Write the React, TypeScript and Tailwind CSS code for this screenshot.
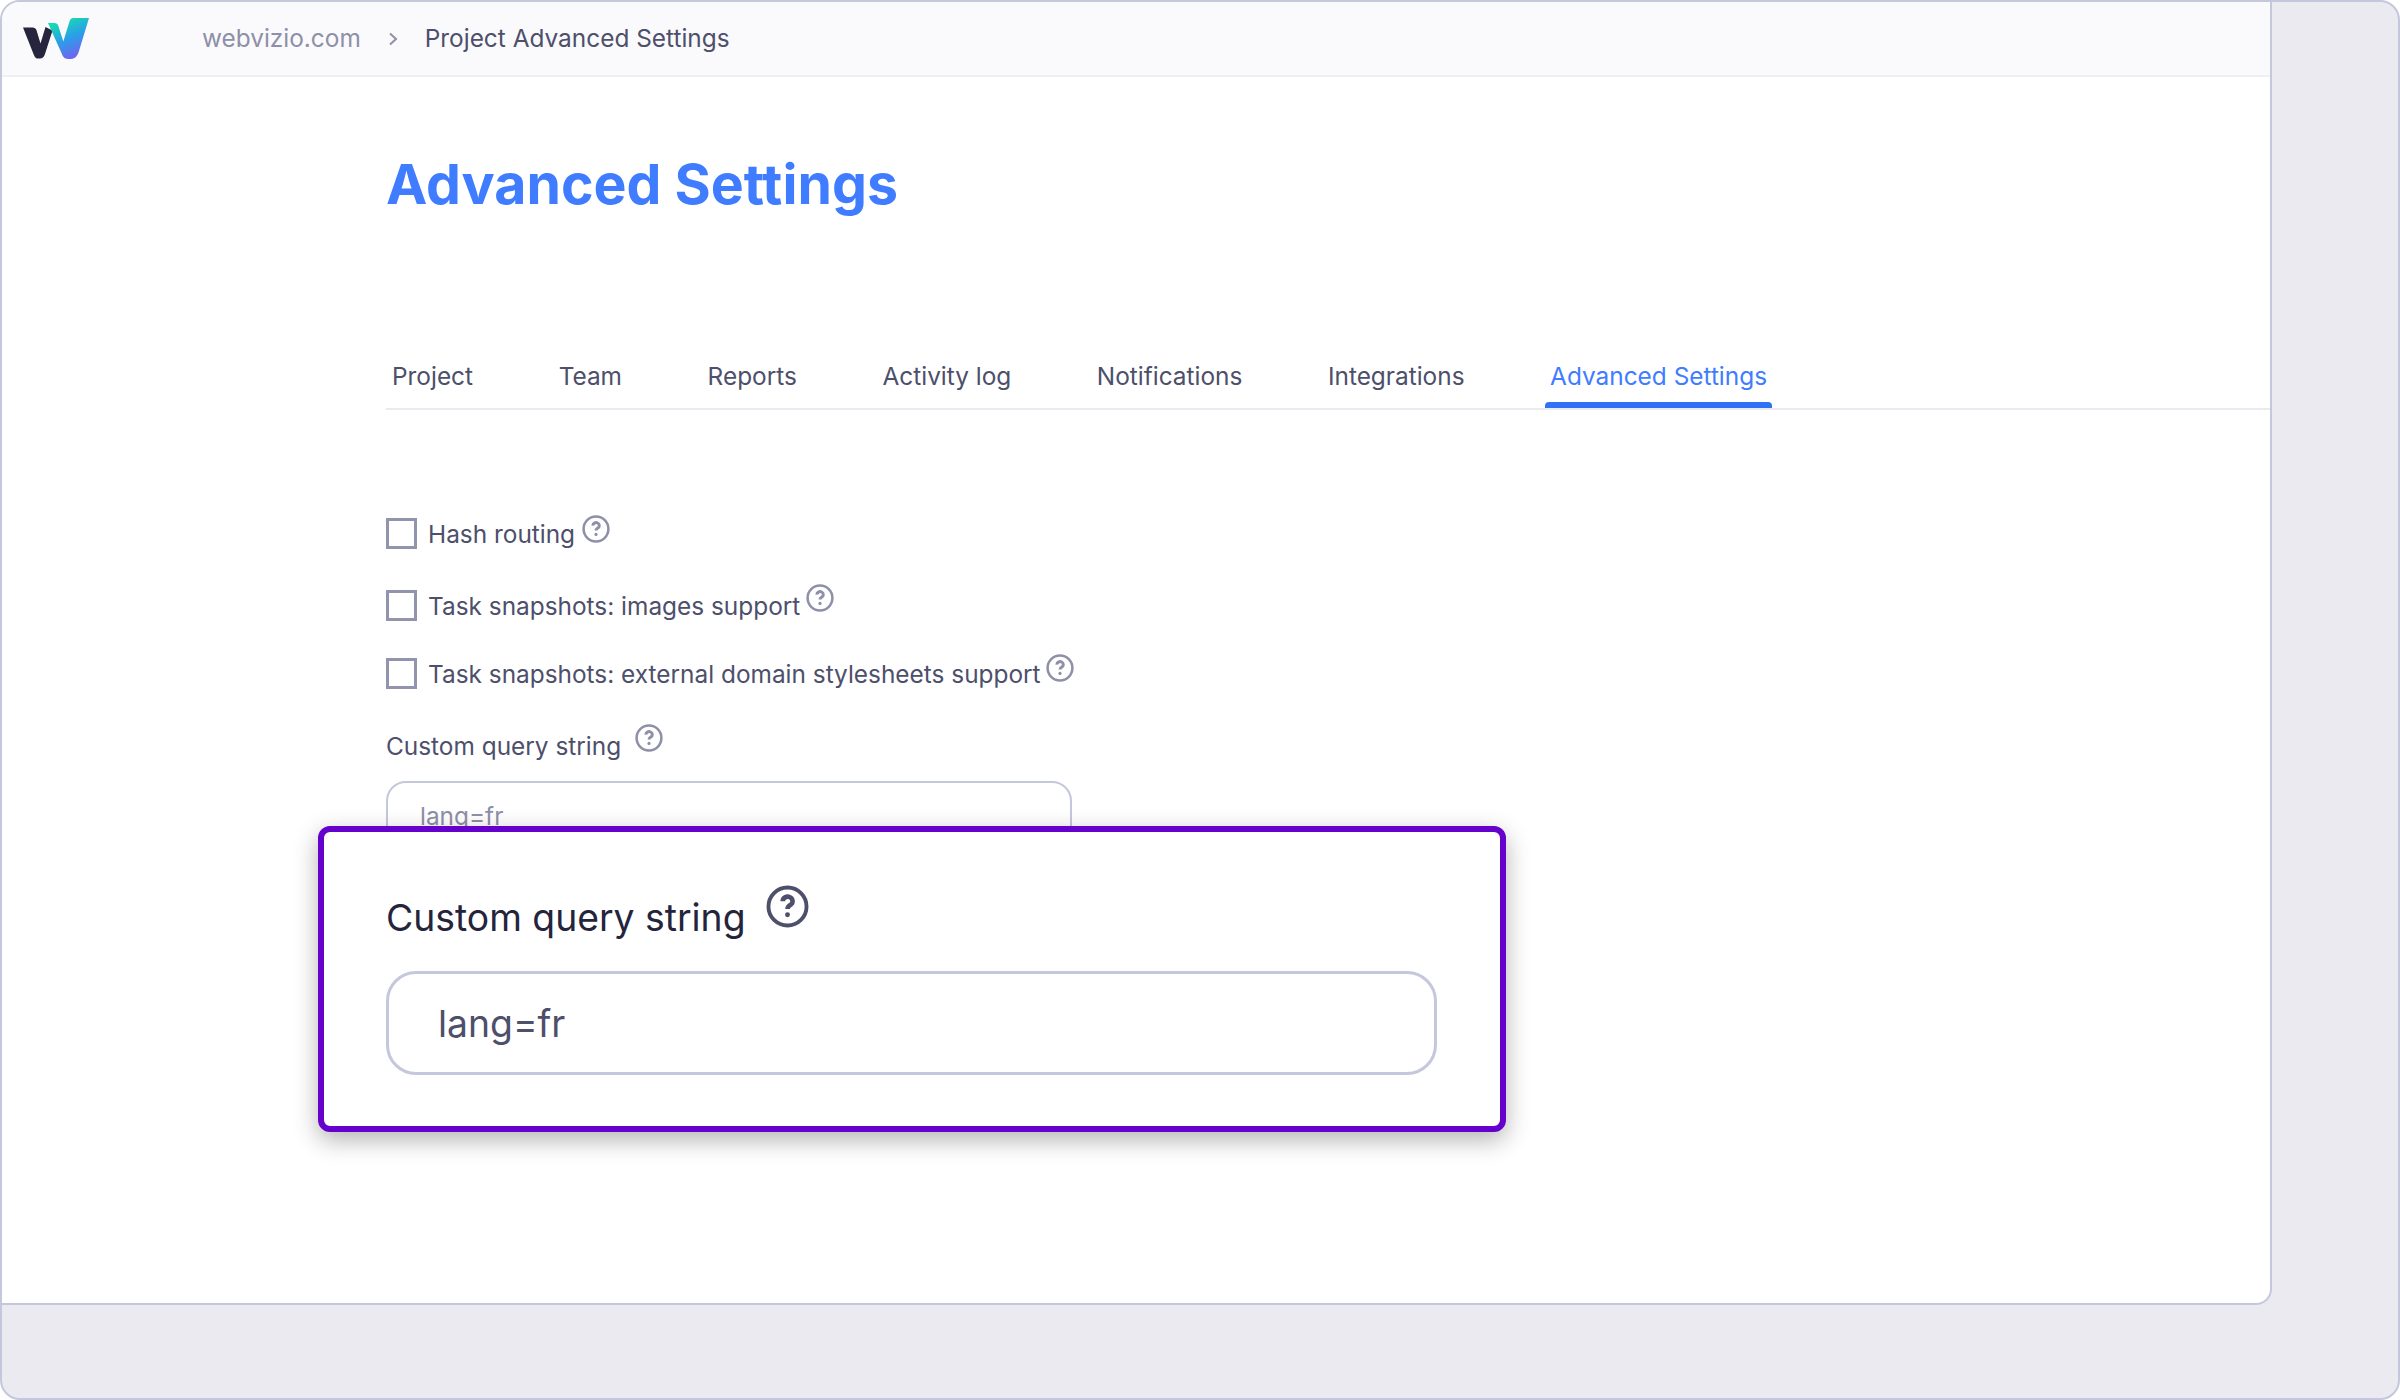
const TABS = ['Project', 'Team', 'Reports', 'Activity log', 'Notifications', 'Integrations', 'Advanced Settings'];

function HelpIcon({ className }: { className: string }) {
  return (
    <svg viewBox="0 0 28 28" fill="none" stroke="currentColor" strokeWidth="2.5" className={`shrink-0 ${className}`}>
      <circle cx="14" cy="14" r="12.4" />
      <path d="M10.9 10.6a3.2 2.9 0 1 1 4.9 2.4c-1.1.7-1.8 1.2-1.8 2.6" strokeWidth="3" />
      <circle cx="14" cy="19.4" r="1.6" fill="currentColor" stroke="none" />
    </svg>
  );
}

function Logo() {
  return (
    <svg viewBox="0 0 66 41" className="h-[41px] w-[66px]">
      <defs>
        <linearGradient id="wv" x1="0.25" y1="0" x2="0.7" y2="1">
          <stop offset="0" stopColor="#13e6a8" />
          <stop offset="0.5" stopColor="#2a9fe8" />
          <stop offset="1" stopColor="#7a5cf2" />
        </linearGradient>
      </defs>
      <path d="M0 9.5h9.5c2 0 3.4 1 4 2.8l4 13.2 5-16.5 7 3.5-7.5 23.5c-1 3-2.6 4.5-5.2 4.5h-1.3c-2.4 0-3.8-1.2-4.6-3.6z" fill="#25253d" />
      <path d="M25 5h6.5c2 0 3.2 1 3.8 2.8l5 15.7 6-19.5c.5-1.7 1.4-4 3.7-4H66L56 33c-1.2 4-3.5 8-8 8h-3c-3.5 0-5-2-6.2-5.2z" fill="url(#wv)" />
    </svg>
  );
}

function CheckRow({ label, shift, className }: { label: string; shift: string; className: string }) {
  return (
    <div className={`flex h-[31px] items-center ${className}`}>
      <div className="h-[31px] w-[31px] shrink-0 border-[3px] border-[#9293ad] bg-white" />
      <span className="ml-[11px] pt-[1px] text-[24.4px] leading-[36px] text-[#4d4f6b]">{label}</span>
      <HelpIcon className={`h-[28px] w-[28px] text-[#8e8fa8] ${shift}`} />
    </div>
  );
}

export default function App() {
  return (
    <div className="h-[1400px] w-[2400px] overflow-hidden rounded-[20px] border-2 border-[#c5c7dc] bg-[#eaeaf0] font-['Inter',sans-serif]">
      <div className="relative h-[1303px] w-[2270px] overflow-hidden rounded-br-[16px] border-r-2 border-b-2 border-[#c5c7dc] bg-white">
        <header className="flex h-[75px] items-center border-b-2 border-[#eeeef3] bg-[#fafafc] pl-[21px]">
          <Logo />
          <span className="ml-[113px] text-[24.4px] text-[#8e8fa8]">webvizio.com</span>
          <svg viewBox="0 0 12 16" fill="none" stroke="#8e8fa8" strokeWidth="2" className="ml-[26px] h-[16px] w-[12px]">
            <path d="M3 2.5 9 8l-6 5.5" />
          </svg>
          <span className="ml-[26px] text-[24.4px] text-[#4d4f6b]">Project Advanced Settings</span>
        </header>

        <main className="pl-[384px]">
          <h1 className="mt-[73px] text-[55.4px] leading-[68px] font-bold text-[#3f7cff]">Advanced Settings</h1>

          <nav className="mt-[140px] flex gap-[75.6px] border-b-2 border-[#eaeaf0] pl-[1px]">
            {TABS.map((tab, i) => {
              const active = i === TABS.length - 1;
              return (
                <div key={tab} className="flex flex-col">
                  <span className={`px-[5px] text-[24.4px] leading-[36px] ${active ? 'text-[#3f7cff]' : 'text-[#4d4f6b]'}`}>{tab}</span>
                  <div className={`mt-[8px] h-[6px] rounded-t-[4px] ${active ? 'bg-[#2f72f5]' : 'bg-transparent'}`} />
                </div>
              );
            })}
          </nav>

          <CheckRow label="Hash routing" shift="mb-[10px] ml-[7px]" className="mt-[108px]" />
          <CheckRow label="Task snapshots: images support" shift="mb-[15px] ml-[6px]" className="mt-[41px]" />
          <CheckRow label="Task snapshots: external domain stylesheets support" shift="mb-[11px] ml-[5px]" className="mt-[37px]" />

          <div className="mt-[39px] flex h-[36px] items-center">
            <span className="text-[24.4px] leading-[36px] text-[#4d4f6b]">Custom query string</span>
            <HelpIcon className="mb-[16px] ml-[14px] h-[28px] w-[28px] text-[#8e8fa8]" />
          </div>
          <div className="mt-[17px] flex h-[70px] w-[686px] items-center rounded-[20px] border-2 border-[#c5c7dc] pl-[32px] text-[24.4px] text-[#8e8fa8]">
            lang=fr
          </div>
        </main>

        <div className="absolute top-[824px] left-[316px] h-[306px] w-[1188px] rounded-[12px] border-[6px] border-[#6600cc] bg-white pl-[62px] shadow-[0_8px_24px_rgba(0,0,0,0.3)]">
          <div className="mt-[52px] flex h-[66px] items-center">
            <span className="text-[37.3px] leading-[55px] text-[#24243c]">Custom query string</span>
            <HelpIcon className="mb-[22px] ml-[20px] h-[43px] w-[43px] text-[#4d4f6b]" />
          </div>
          <div className="mt-[21px] flex h-[104px] w-[1051px] items-center rounded-[30px] border-[3px] border-[#c5c7dc] pt-[2px] pl-[49px] text-[37.3px] text-[#4d4f6b]">
            lang=fr
          </div>
        </div>
      </div>
    </div>
  );
}
